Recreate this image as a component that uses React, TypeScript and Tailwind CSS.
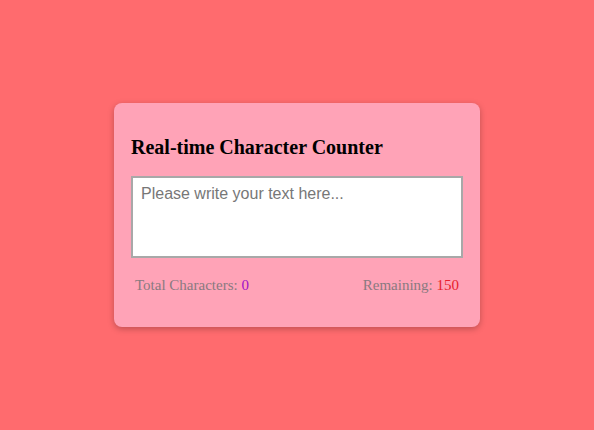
import { useState } from 'react';

const MAX_CHARS = 150;

export default function App() {
  const [text, setText] = useState('');

  return (
    <div className="min-h-screen flex items-center justify-center bg-[#ff6b6e]">
      <div className="w-[366px] rounded-lg bg-[#ffa3b7] px-[17px] pt-[33px] pb-[33px] shadow-[0_2px_6px_rgba(0,0,0,0.25)]">
        <h3 className="text-[20px] leading-[23px] font-bold text-black font-['Liberation_Serif',serif]">
          Real-time Character Counter
        </h3>
        <textarea
          value={text}
          onChange={(e) => setText(e.target.value)}
          maxLength={MAX_CHARS}
          placeholder="Please write your text here..."
          className="mt-[17px] block w-full h-[82px] resize-none bg-white border-2 border-[#a8a8a8] px-[8px] py-[6px] text-[16px] leading-[19px] text-black placeholder:text-[#777] font-['Liberation_Sans',sans-serif] outline-none"
        />
        <div className="mt-[18px] flex justify-between px-[4px] text-[15px] leading-[18px] text-[#8a7a80] font-['Liberation_Serif',serif]">
          <span>
            Total Characters: <span className="text-[#a010c8]">{text.length}</span>
          </span>
          <span>
            Remaining: <span className="text-[#e8202c]">{MAX_CHARS - text.length}</span>
          </span>
        </div>
      </div>
    </div>
  );
}
